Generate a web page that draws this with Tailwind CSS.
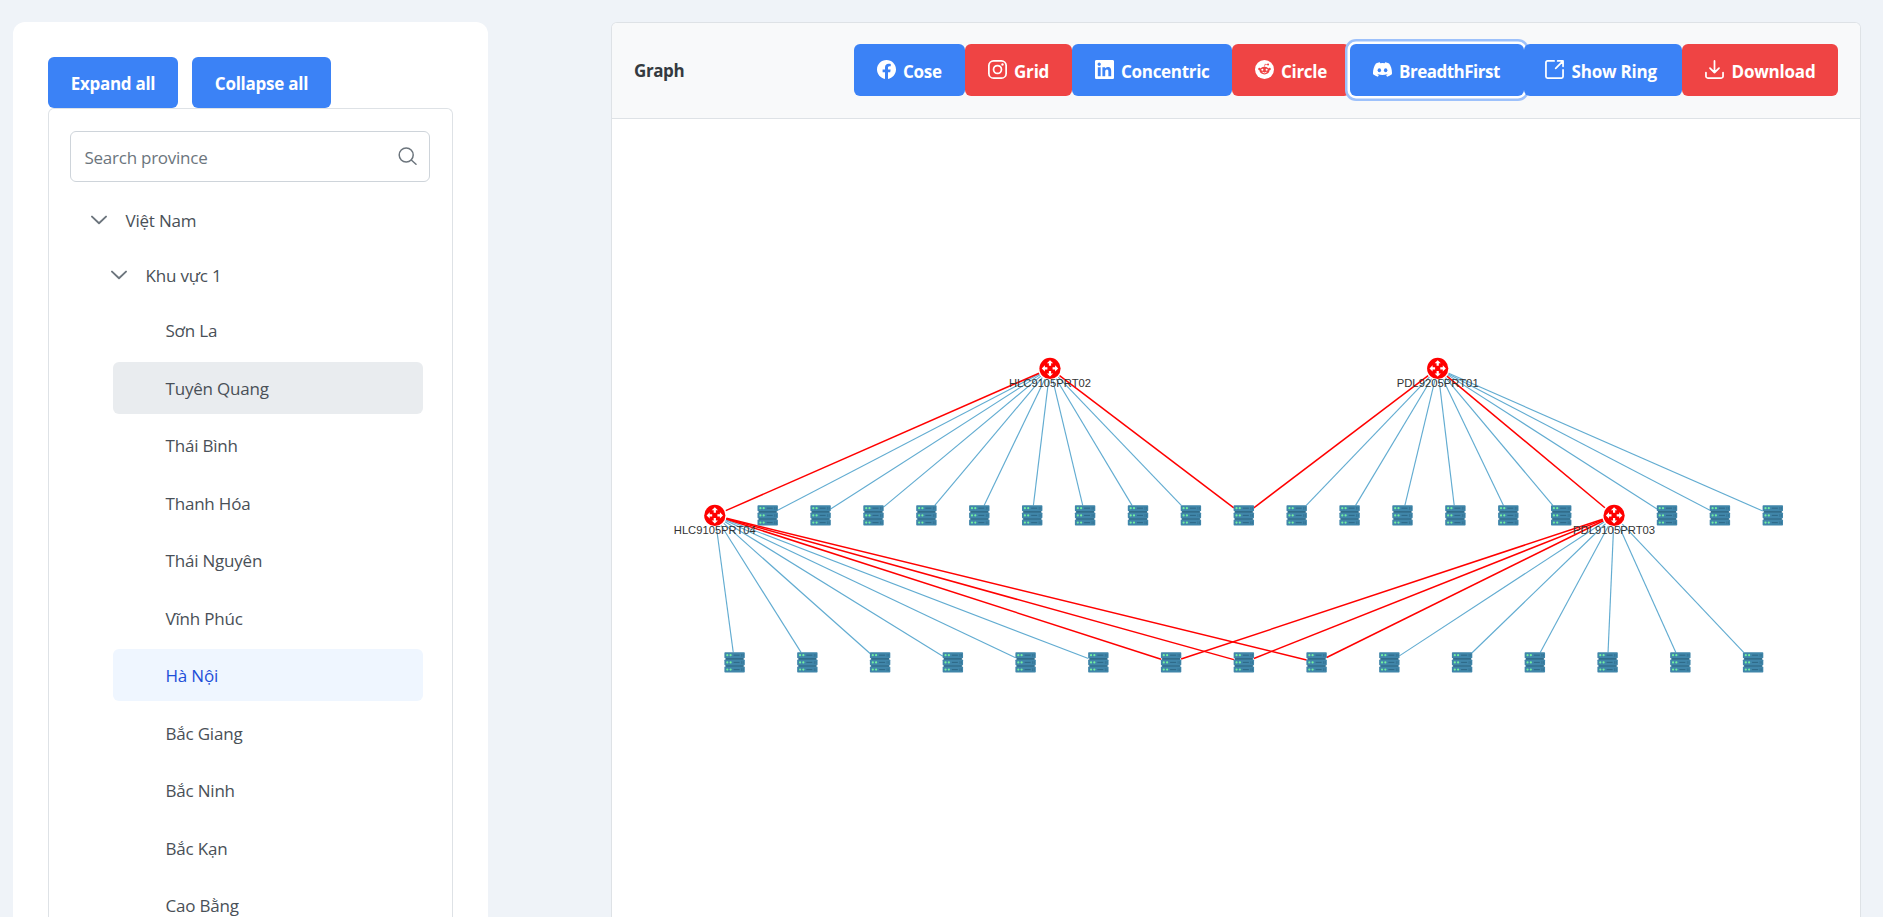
<!DOCTYPE html>
<html lang="vi">
<head>
<meta charset="utf-8">
<title>Graph</title>
<script src="https://cdn.jsdelivr.net/npm/@tailwindcss/browser@4"></script>
</head>
<body class="h-[917px] w-[1883px] overflow-hidden bg-[#eff3f8] font-['Open_Sans','Noto_Sans',sans-serif] text-[17px] leading-[26px] tracking-[-0.2px] text-[#495057]">
<div class="flex h-full items-stretch overflow-hidden pl-[13px] pt-[22px]">

  <aside class="flex w-[475px] shrink-0 flex-col overflow-hidden rounded-t-xl bg-white px-[35px] pt-[35px]">
    <div class="flex shrink-0 gap-[14px] font-bold text-white">
      <button class="h-[51px] w-[130px] rounded-[6px] bg-[#3b82f6] pt-[3px] tracking-[-0.3px]">Expand all</button>
      <button class="h-[51px] w-[139px] rounded-[6px] bg-[#3b82f6] pt-[3px] tracking-[-0.25px]">Collapse all</button>
    </div>
    <div class="min-h-0 w-[405px] flex-1 overflow-hidden rounded-t-[6px] border border-b-0 border-[#dee2e6] px-[21px] pt-[22px]">
      <div class="flex h-[51px] w-[360px] items-center justify-between rounded-[6px] border border-[#ced4da] pl-[13.5px] pr-[12px]">
        <span class="pt-[2px] tracking-[-0.25px] text-[#6c757d]">Search province</span>
        <svg class="size-[19px]" viewBox="0 0 19 19" fill="none" stroke="#6c757d" stroke-width="1.5" stroke-linecap="round"><circle cx="8.2" cy="8" r="7"/><path d="M13.3 13 18 17.2"/></svg>
      </div>
      <div class="flex flex-col pt-[11px]">
        <div class="flex h-[55px] items-center gap-[18.5px] pl-[21px]">
          <svg class="size-[16px] -translate-y-px" viewBox="0 0 16 16" fill="none" stroke="#6c757d" stroke-width="1.9" stroke-linecap="round" stroke-linejoin="round"><path d="M1 4.6 8 11.2l7-6.6"/></svg>
          <span>Việt Nam</span>
        </div>
        <div class="flex h-[55px] items-center gap-[18.5px] pl-[41px]">
          <svg class="size-[16px] -translate-y-px" viewBox="0 0 16 16" fill="none" stroke="#6c757d" stroke-width="1.9" stroke-linecap="round" stroke-linejoin="round"><path d="M1 4.6 8 11.2l7-6.6"/></svg>
          <span>Khu vực 1</span>
        </div>
        <div class="ml-[43px] flex w-[310px] flex-col gap-[5.5px] pt-px">
          <div class="flex h-[52px] items-center rounded-[6px] pl-[52.5px] pt-[2px]">Sơn La</div>
          <div class="flex h-[52px] items-center rounded-[6px] bg-[#e9ecef] pl-[52.5px] pt-[2px]">Tuyên Quang</div>
          <div class="flex h-[52px] items-center rounded-[6px] pl-[52.5px] pt-[2px]">Thái Bình</div>
          <div class="flex h-[52px] items-center rounded-[6px] pl-[52.5px] pt-[2px]">Thanh Hóa</div>
          <div class="flex h-[52px] items-center rounded-[6px] pl-[52.5px] pt-[2px]">Thái Nguyên</div>
          <div class="flex h-[52px] items-center rounded-[6px] pl-[52.5px] pt-[2px]">Vĩnh Phúc</div>
          <div class="flex h-[52px] items-center rounded-[6px] bg-[#eff6ff] pl-[52.5px] pt-[2px] text-[#1d4ed8]">Hà Nội</div>
          <div class="flex h-[52px] items-center rounded-[6px] pl-[52.5px] pt-[2px]">Bắc Giang</div>
          <div class="flex h-[52px] items-center rounded-[6px] pl-[52.5px] pt-[2px]">Bắc Ninh</div>
          <div class="flex h-[52px] items-center rounded-[6px] pl-[52.5px] pt-[2px]">Bắc Kạn</div>
          <div class="flex h-[52px] items-center rounded-[6px] pl-[52.5px] pt-[2px]">Cao Bằng</div>
        </div>
      </div>
    </div>
  </aside>

  <main class="ml-[123px] w-[1250px] shrink-0 overflow-hidden rounded-t-[6px] border border-b-0 border-[#dee2e6] bg-white">
    <header class="flex h-[96px] items-center justify-between border-b border-[#dee2e6] bg-[#f8f9fa] pb-px pl-[22px] pr-[22px] font-bold">
      <span class="pt-[2px] tracking-[-0.4px] text-[#343a40]">Graph</span>
      <div class="flex text-white">
        <button class="flex h-[52px] w-[111px] items-center gap-[7.5px] rounded-[6px] bg-[#3b82f6] pl-[22.5px]">
          <svg class="mb-[2px] size-[19px]" viewBox="0 0 24 24" fill="currentColor"><path d="M24 12.073c0-6.627-5.373-12-12-12s-12 5.373-12 12c0 5.99 4.388 10.954 10.125 11.854v-8.385H7.078v-3.47h3.047V9.43c0-3.007 1.792-4.669 4.533-4.669 1.312 0 2.686.235 2.686.235v2.953H15.83c-1.491 0-1.956.925-1.956 1.874v2.25h3.328l-.532 3.47h-2.796v8.385C19.612 23.027 24 18.062 24 12.073z"/></svg>
          <span class="pt-[4px] tracking-[-0.3px]">Cose</span>
        </button>
        <button class="flex h-[52px] w-[107px] items-center gap-[7.5px] rounded-[6px] bg-[#ef4444] pl-[22.5px]">
          <svg class="mb-[2px] size-[19px]" viewBox="0 0 24 24" fill="none" stroke="currentColor" stroke-width="2.2"><rect x="1.1" y="1.1" width="21.8" height="21.8" rx="6"/><circle cx="12" cy="12" r="5"/><circle cx="18.3" cy="5.7" r="1.5" fill="currentColor" stroke="none"/></svg>
          <span class="pt-[4px] tracking-[-0.2px]">Grid</span>
        </button>
        <button class="flex h-[52px] w-[160px] items-center gap-[7.5px] rounded-[6px] bg-[#3b82f6] pl-[22.5px]">
          <svg class="mb-[2px] size-[19px]" viewBox="0 0 24 24" fill="currentColor"><path d="M20.447 20.452h-3.554v-5.569c0-1.328-.027-3.037-1.852-3.037-1.853 0-2.136 1.445-2.136 2.939v5.667H9.351V9h3.414v1.561h.046c.477-.9 1.637-1.85 3.37-1.85 3.601 0 4.267 2.37 4.267 5.455v6.286zM5.337 7.433c-1.144 0-2.063-.926-2.063-2.065 0-1.138.92-2.063 2.063-2.063 1.14 0 2.064.925 2.064 2.063 0 1.139-.925 2.065-2.064 2.065zm1.782 13.019H3.555V9h3.564v11.452zM22.225 0H1.771C.792 0 0 .774 0 1.729v20.542C0 23.227.792 24 1.771 24h20.451C23.2 24 24 23.227 24 22.271V1.729C24 .774 23.2 0 22.222 0h.003z"/></svg>
          <span class="pt-[4px] tracking-[-0.3px]">Concentric</span>
        </button>
        <button class="flex h-[52px] w-[117.5px] items-center gap-[7.5px] rounded-[6px] bg-[#ef4444] pl-[22.5px]">
          <svg class="mb-[2px] size-[19px]" viewBox="0 0 24 24"><circle cx="12" cy="12" r="12" fill="currentColor"/><g fill="#ef4444"><circle cx="16.5" cy="5.7" r="1.3"/><path d="m11.6 8.2.9-3.4 3.9.8-.2.8-3.1-.6-.6 2.4z"/><ellipse cx="12" cy="13.4" rx="6.3" ry="4.8"/><circle cx="5.6" cy="11.5" r="1.6"/><circle cx="18.4" cy="11.5" r="1.6"/></g><circle cx="9.3" cy="12.3" r="1.3" fill="currentColor"/><circle cx="14.7" cy="12.3" r="1.3" fill="currentColor"/><path d="M9.4 15.4q2.6 1.8 5.2 0" fill="none" stroke="currentColor" stroke-width="1.1"/></svg>
          <span class="pt-[4px] tracking-[-0.3px]">Circle</span>
        </button>
        <button class="flex h-[52px] w-[174.5px] items-center gap-[7.5px] rounded-[6px] bg-[#3b82f6] pl-[23px] shadow-[0_0_0_2.5px_#ffffff,0_0_0_5px_#9dc1fb]">
          <svg class="mb-[2px] size-[19px]" viewBox="0 0 24 24"><path fill="currentColor" d="M20.317 4.37a19.8 19.8 0 0 0-4.885-1.515l-.687 1.286a18.3 18.3 0 0 0-5.487 0L8.56 2.855A19.7 19.7 0 0 0 3.68 4.37C.53 9.05-.32 13.58.1 18.06c2.05 1.5 4.04 2.42 6.08 3.06l1.25-2.04-1.87-.98.38-.42c3.93 1.79 8.18 1.79 12.12 0l.38.42-1.9.98 1.28 2.04c1.96-.6 3.95-1.52 6.06-3.06.5-5.18-.84-9.68-3.55-13.69z"/><ellipse cx="8.02" cy="12.9" rx="2.16" ry="2.42" fill="#3b82f6"/><ellipse cx="15.99" cy="12.9" rx="2.16" ry="2.42" fill="#3b82f6"/></svg>
          <span class="pt-[4px] tracking-[-0.5px]">BreadthFirst</span>
        </button>
        <button class="z-10 flex h-[52px] w-[158px] items-center gap-[8px] rounded-[6px] bg-[#3b82f6] pl-[20.5px]">
          <svg class="mb-[2px] size-[19px]" viewBox="0 0 24 24" fill="none" stroke="currentColor" stroke-width="2.2" stroke-linecap="round" stroke-linejoin="round"><path d="M11.5 1.2H3.2a2 2 0 0 0-2 2v17.6a2 2 0 0 0 2 2h17.6a2 2 0 0 0 2-2v-8.3"/><path d="M16 1.2h6.8V8M22.6 1.4 13.5 10.5"/></svg>
          <span class="pt-[4px] tracking-[-0.2px]">Show Ring</span>
        </button>
        <button class="flex h-[52px] w-[156px] items-center gap-[8px] rounded-[6px] bg-[#ef4444] pl-[22.5px]">
          <svg class="mb-[2px] size-[19px]" viewBox="0 0 24 24" fill="none" stroke="currentColor" stroke-width="2.2" stroke-linecap="round" stroke-linejoin="round"><path d="M12 1.2v14.6M6.3 10.2l5.7 5.7 5.7-5.7M1.2 15.8v4.6a2.4 2.4 0 0 0 2.4 2.4h16.8a2.4 2.4 0 0 0 2.4-2.4v-4.6"/></svg>
          <span class="pt-[4px] tracking-[-0.2px]">Download</span>
        </button>
      </div>
    </header>
    <svg id="graph" class="block h-[798px] w-[1248px]" viewBox="612 119 1248 798">
      <defs>
        <g id="router">
          <circle r="10.6" fill="#f00"/>
          <g id="arrow" fill="#fff"><path d="M0-8.2 3.1-5.1H1.1V-2.6H-1.1V-5.1H-3.1z"/></g>
          <use href="#arrow" transform="rotate(90)"/><use href="#arrow" transform="rotate(180)"/><use href="#arrow" transform="rotate(270)"/>
        </g>
        <g id="server">
          <rect x="-9" y="-9" width="18" height="18" fill="#2c6480"/>
          <g id="unit"><rect x="-10.2" y="-10.2" width="20.4" height="6" rx=".8" fill="#4086aa"/><circle cx="-7.3" cy="-7.2" r="1.1" fill="#72efa0"/><circle cx="-4" cy="-7.2" r="1.1" fill="#72efa0"/><path d="M-1-7.2H5" stroke="#2f6a88" stroke-width="1.1"/><path d="M7-8.4v2.6M8.6-8.4v2.6" stroke="#2f6a88" stroke-width=".6"/></g>
          <use href="#unit" y="7.2"/><use href="#unit" y="14.4"/>
        </g>
      </defs>
    </svg>
  </main>
</div>
<script>
const NS = 'http://www.w3.org/2000/svg', root = document.getElementById('graph');
const add = (tag, attrs, text) => {
  const el = document.createElementNS(NS, tag);
  for (const k in attrs) el.setAttribute(k, attrs[k]);
  if (text) el.textContent = text;
  root.appendChild(el);
};
const mid = i => [714.8 + i * 52.9, 515.4], low = i => [734.6 + i * 72.75, 662.4];
const A = [1050, 368.4], B = [1437.7, 368.4], C = mid(0), D = mid(17);
const edge = (a, b, red, router) => {
  const dx = b[0] - a[0], dy = b[1] - a[1], l = Math.hypot(dx, dy);
  const end = router ? 12 : Math.min(10 * l / Math.abs(dx || 1), 10 * l / Math.abs(dy));
  add('line', { x1: a[0] + dx * 12 / l, y1: a[1] + dy * 12 / l, x2: b[0] - dx * end / l, y2: b[1] - dy * end / l,
    stroke: red ? '#ff0000' : '#62acd1', 'stroke-width': red ? 1.5 : 1.15 });
};
for (let i = 1; i < 10; i++) edge(A, mid(i));
for (const i of [11, 12, 13, 14, 15, 16, 18, 19, 20]) edge(B, mid(i));
for (let i = 0; i < 6; i++) edge(C, low(i));
for (let i = 9; i < 15; i++) edge(D, low(i));
edge(A, C, true, true); edge(A, mid(10), true); edge(B, mid(10), true); edge(B, D, true, true);
for (let i = 6; i < 9; i++) { edge(C, low(i), true); edge(D, low(i), true); }
for (let i = 1; i < 21; i++) if (i !== 17) add('use', { href: '#server', x: mid(i)[0], y: mid(i)[1] });
for (let i = 0; i < 15; i++) add('use', { href: '#server', x: low(i)[0], y: low(i)[1] });
for (const [p, name] of [[A, 'HLC9105PRT02'], [B, 'PDL9205PRT01'], [C, 'HLC9105PRT04'], [D, 'PDL9105PRT03']]) {
  add('use', { href: '#router', x: p[0], y: p[1] });
  add('text', { x: p[0], y: p[1] + 19, 'text-anchor': 'middle', fill: '#333', class: "font-['Liberation_Sans',sans-serif] text-[11.5px] tracking-normal",
    textLength: 82, lengthAdjust: 'spacingAndGlyphs' }, name);
}
</script>
</body>
</html>
